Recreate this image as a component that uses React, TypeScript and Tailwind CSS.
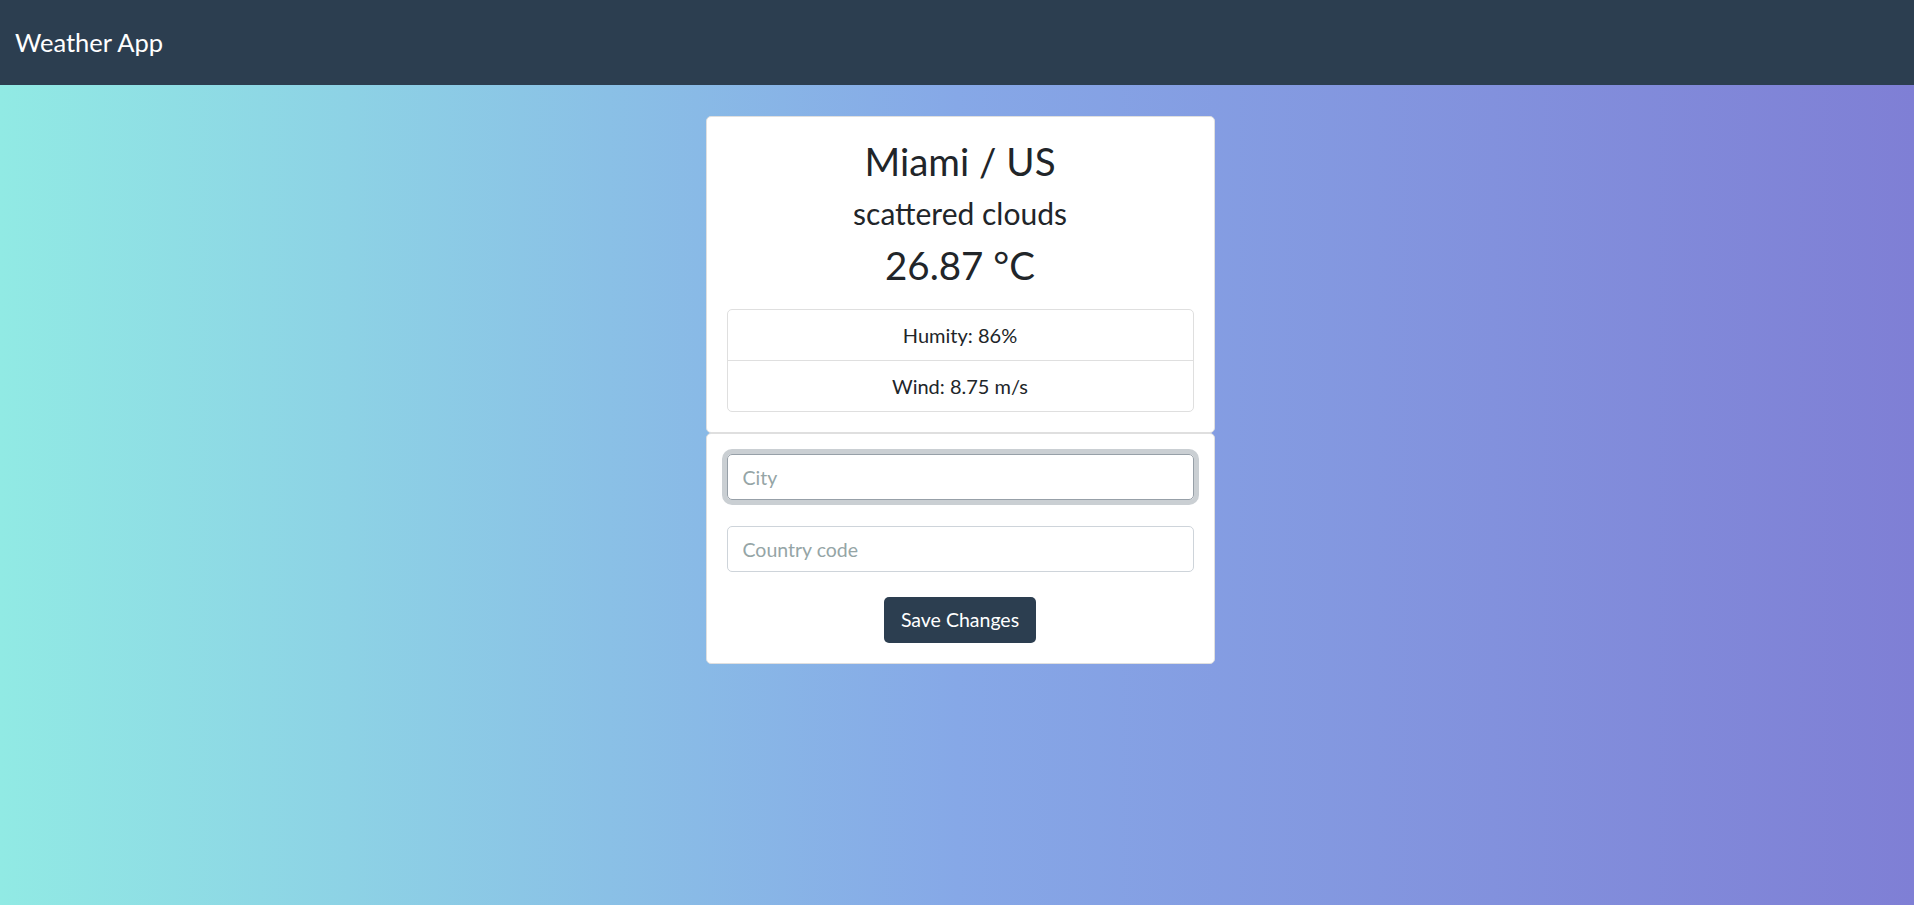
import React, { useState } from 'react'

function App() {
  const [city, setCity] = useState('')
  const [country, setCountry] = useState('')

  const weather = {
    city: 'Miami',
    country: 'US',
    description: 'scattered clouds',
    temp: 26.87,
    humidity: 86,
    wind: 8.75,
  }

  return (
    <div className="min-h-screen flex flex-col font-['Lato',_'Open_Sans',_sans-serif] text-[#212529]">
      {/* Navbar */}
      <nav className="h-[85px] shrink-0 bg-[#2c3e50] px-[15px] flex items-center">
        <span className="text-white text-[25.5px] leading-none">Weather App</span>
      </nav>

      {/* Content */}
      <main className="flex-1 bg-linear-to-r/srgb from-[#91eae4] via-[#86a8e7] to-[#7f7fd5] pt-[31px] pb-10">
        <div className="flex justify-center pl-[6px]">
          <div className="w-[509px]">
            {/* Weather info */}
            <div className="bg-white border border-[#dfdfdf] rounded-[5px] p-[20px] text-center">
              <h2 className="text-[38.5px] leading-[48px] mb-[10px]">
                {weather.city} / {weather.country}
              </h2>
              <h3 className="text-[30px] leading-[36px] mb-[10px]">{weather.description}</h3>
              <h2 className="text-[38.5px] leading-[48px] mb-[20px]">{weather.temp} °C</h2>
              <ul className="border border-[#dfdfdf] rounded-[5px] text-[20px] leading-[30px]">
                <li className="py-[10px] border-b border-[#dfdfdf]">Humity: {weather.humidity}%</li>
                <li className="py-[10px]">Wind: {weather.wind} m/s</li>
              </ul>
            </div>

            {/* Form */}
            <div className="bg-white border border-[#dfdfdf] rounded-[5px] p-[20px]">
              <form onSubmit={(e) => e.preventDefault()}>
                <input
                  autoFocus
                  value={city}
                  onChange={(e) => setCity(e.target.value)}
                  placeholder="City"
                  className="block w-full h-[46px] px-[15px] text-[19.5px] border border-[#97a0a8] rounded-[5px] outline-none ring-[5px] ring-[#cacfd3] placeholder:text-[#95a5a6] mb-[26px]"
                />
                <input
                  value={country}
                  onChange={(e) => setCountry(e.target.value)}
                  placeholder="Country code"
                  className="block w-full h-[46px] px-[15px] text-[19.5px] border border-[#ced4da] rounded-[5px] outline-none placeholder:text-[#95a5a6] mb-[25px]"
                />
                <div className="flex justify-center">
                  <button
                    type="submit"
                    className="h-[46px] w-[152px] bg-[#2c3e50] text-white text-[19.5px] rounded-[5px]"
                  >
                    Save Changes
                  </button>
                </div>
              </form>
            </div>
          </div>
        </div>
      </main>
    </div>
  )
}

export default App
